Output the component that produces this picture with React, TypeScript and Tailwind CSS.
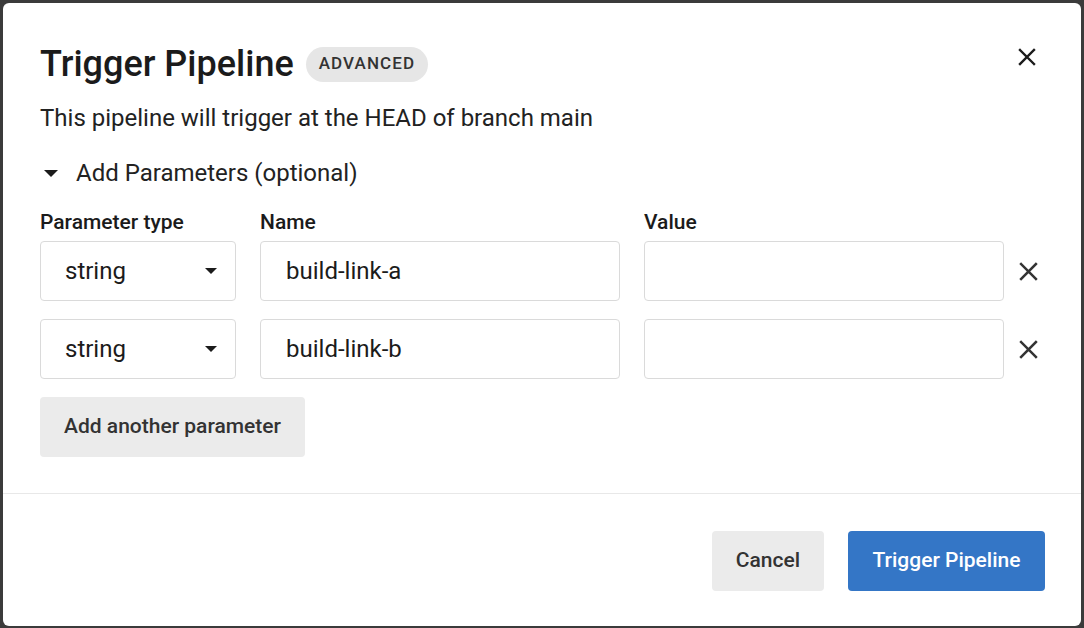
import React, { useState } from 'react';

type Param = { type: string; name: string; value: string };

const CloseIcon: React.FC<{ size?: number; stroke?: number; className?: string }> = ({ size = 18, stroke = 2.2, className }) => (
    <svg width={size} height={size} viewBox="0 0 18 18" className={className} fill="none">
        <path d="M2 2 L16 16 M16 2 L2 16" stroke="currentColor" strokeWidth={stroke} strokeLinecap="square" />
    </svg>
);

const Caret: React.FC<{ w: number; h: number }> = ({ w, h }) => (
    <svg width={w} height={h} viewBox={`0 0 ${w} ${h}`}>
        <path d={`M0 0 L${w} 0 L${w / 2} ${h} Z`} fill="currentColor" />
    </svg>
);

const App: React.FC = () => {
    const [params, setParams] = useState<Param[]>([
        { type: 'string', name: 'build-link-a', value: '' },
        { type: 'string', name: 'build-link-b', value: '' },
    ]);

    const updateParam = (idx: number, field: keyof Param, value: string) => {
        const next = [...params];
        next[idx] = { ...next[idx], [field]: value };
        setParams(next);
    };

    const removeParam = (idx: number) => {
        const next = [...params];
        next.splice(idx, 1);
        setParams(next);
    };

    const addParam = () => {
        setParams([...params, { type: 'string', name: '', value: '' }]);
    };

    return (
        <div className="w-screen h-screen bg-[#3b3b3b] pt-[3px] pl-[3px] pr-[3px] pb-[2px] font-['Roboto',sans-serif]">
            <div className="bg-white rounded-[6px] h-full flex flex-col">
                <div className="pl-[37px] pr-[37px] pt-[41px]">
                    <div className="flex items-start justify-between">
                        <div className="flex items-center h-[40px] gap-[12px]">
                            <h1 className="text-[36px] leading-[40px] font-medium text-[#1b1b1b]">Trigger Pipeline</h1>
                            <span className="h-[35px] px-[13px] rounded-full bg-[#e6e6e6] text-[#333] text-[17px] font-medium tracking-[1.1px] flex items-center">
                                ADVANCED
                            </span>
                        </div>
                        <button className="mt-[4px] mr-[8px] text-[#1b1b1b]">
                            <CloseIcon size={18} stroke={2.4} />
                        </button>
                    </div>

                    <p className="mt-[20px] text-[24px] leading-[28px] text-[#222]">
                        This pipeline will trigger at the HEAD of branch main
                    </p>

                    <div className="mt-[27px] flex items-center h-[28px] text-[#222]">
                        <span className="ml-[4px] mr-[18px] text-[#1b1b1b]">
                            <Caret w={14} h={7} />
                        </span>
                        <span className="text-[24px] leading-[28px]">Add Parameters (optional)</span>
                    </div>

                    <div className="mt-[23px] flex text-[21px] leading-[24px] font-medium text-[#1b1b1b]">
                        <div className="w-[196px]">Parameter type</div>
                        <div className="w-[360px] ml-[24px]">Name</div>
                        <div className="w-[360px] ml-[24px]">Value</div>
                    </div>

                    <div className="mt-[7px] flex flex-col gap-[18px]">
                        {params.map((p, idx) => (
                            <div key={idx} className="flex items-center">
                                <div className="w-[196px] h-[60px] border border-[#dadada] rounded-[4px] flex items-center justify-between pl-[24px] pr-[18px] text-[24px] text-[#1b1b1b]">
                                    <span>{p.type}</span>
                                    <Caret w={12} h={6} />
                                </div>
                                <input
                                    type="text"
                                    value={p.name}
                                    onChange={(e) => updateParam(idx, 'name', e.target.value)}
                                    className="ml-[24px] w-[360px] h-[60px] border border-[#dadada] rounded-[4px] px-[25px] text-[24px] text-[#1b1b1b] outline-none"
                                />
                                <input
                                    type="text"
                                    value={p.value}
                                    onChange={(e) => updateParam(idx, 'value', e.target.value)}
                                    className="ml-[24px] w-[360px] h-[60px] border border-[#dadada] rounded-[4px] px-[25px] text-[24px] text-[#1b1b1b] outline-none"
                                />
                                <button onClick={() => removeParam(idx)} className="ml-[15px] text-[#333]">
                                    <CloseIcon size={19} stroke={2.4} />
                                </button>
                            </div>
                        ))}
                    </div>

                    <button
                        onClick={addParam}
                        className="mt-[18px] h-[60px] w-[265px] rounded-[4px] bg-[#ebebeb] text-[21px] font-medium text-[#333]"
                    >
                        Add another parameter
                    </button>
                </div>

                <div className="mt-[36px] border-t border-[#e8e8e8]" />

                <div className="flex justify-end gap-[24px] pt-[37px] pr-[36px]">
                    <button className="h-[60px] w-[112px] rounded-[4px] bg-[#ebebeb] text-[21px] font-medium text-[#333]">
                        Cancel
                    </button>
                    <button className="h-[60px] w-[197px] rounded-[4px] bg-[#3476c6] text-[21px] font-medium text-white">
                        Trigger Pipeline
                    </button>
                </div>
            </div>
        </div>
    );
};

export default App;
